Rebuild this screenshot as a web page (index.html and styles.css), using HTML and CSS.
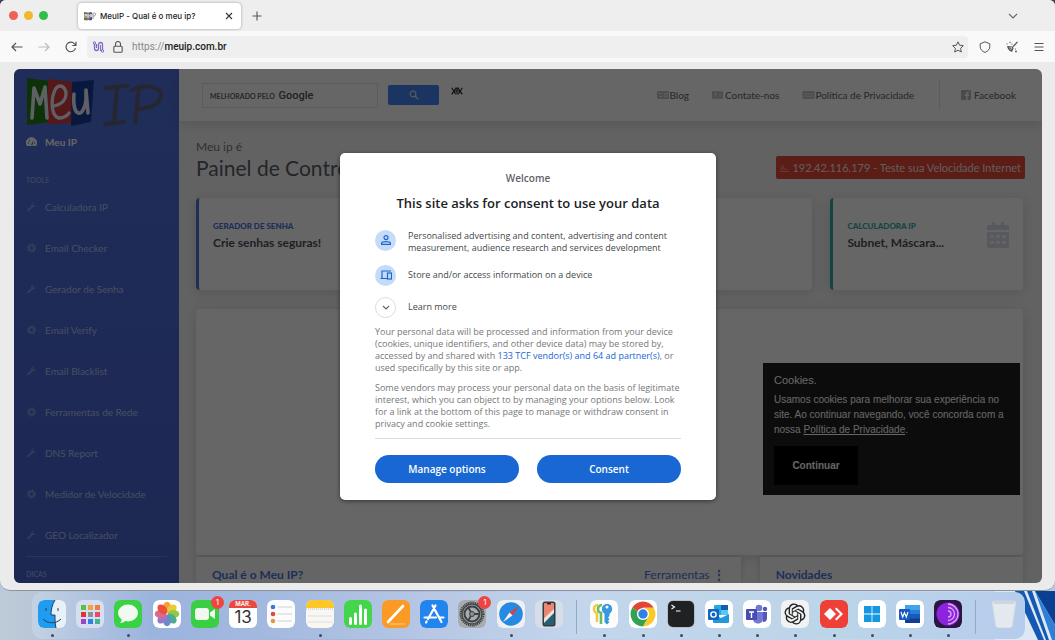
FILE: index.html
```html
<!DOCTYPE html>
<html lang="pt-BR">
<head>
<meta charset="utf-8">
<title>MeuIP - Qual é o meu ip?</title>
<link rel="stylesheet" href="styles.css">
</head>
<body>
<svg class="defs" aria-hidden="true">
  <symbol id="wrench" viewBox="0 0 16 16"><path fill="currentColor" d="M15 4.2a4 4 0 0 1-5.3 4L4 14.4A1.7 1.7 0 0 1 1.500 12L7.700 6.200A4 4 0 0 1 11.800 1L10 3.200l.4 2.300 2.300.4z"/></symbol>
  <symbol id="cog" viewBox="0 0 16 16"><circle cx="8" cy="8" r="4.200" fill="none" stroke="currentColor" stroke-width="3"/><circle cx="8" cy="8" r="6.500" fill="none" stroke="currentColor" stroke-width="2" stroke-dasharray="2.600 2.500"/></symbol>
</svg>

<div class="window">
  <div class="tabbar">
    <div class="lights"><span class="light red"></span><span class="light yellow"></span><span class="light green"></span></div>
    <div class="tab">
      <svg width="12" height="10" viewBox="0 0 24 20"><path fill="#58794f" d="M0 2l7 1v16l-7-1z"/><path fill="#b06a66" d="M6 3h6v15H6z"/><path fill="#3f4e86" d="M11 2l5 1v15l-5 1z"/><path fill="none" stroke="#eee" stroke-width="1.500" d="M2 14V6l2 4 2-4v8M8 10h3c0-4-3-4-3 0 0 4 3 3 3 3M13 6v6h2V6"/><path fill="none" stroke="#938890" stroke-width="2" d="M18 4v12M19 4c6-1 6 6 0 6"/></svg>
      <span class="tab-title">MeuIP - Qual é o meu ip?</span>
      <button class="plain" aria-label="Close tab"><svg width="8" height="8" viewBox="0 0 8 8"><path d="M1 1l6 6M7 1L1 7" stroke="#333" stroke-width="1.100"/></svg></button>
    </div>
    <button class="plain" aria-label="New tab"><svg width="10" height="10" viewBox="0 0 10 10"><path d="M5 .5v9M.5 5h9" stroke="#555" stroke-width="1.100"/></svg></button>
    <button class="plain tabs-menu" aria-label="List tabs"><svg width="10" height="6" viewBox="0 0 10 6"><path d="M1 1l4 4 4-4" fill="none" stroke="#666" stroke-width="1.100"/></svg></button>
  </div>
  <div class="toolbar">
    <button class="plain tool" aria-label="Back"><svg width="12" height="10" viewBox="0 0 12 10"><path d="M11.500 5H1M5 1L1 5l4 4" fill="none" stroke="#555" stroke-width="1.200"/></svg></button>
    <button class="plain tool" aria-label="Forward"><svg width="12" height="10" viewBox="0 0 12 10"><path d="M.5 5H11M7 1l4 4-4 4" fill="none" stroke="#bbb" stroke-width="1.200"/></svg></button>
    <button class="plain tool" aria-label="Reload"><svg width="12" height="12" viewBox="0 0 12 12"><path d="M10.500 7.200A4.800 4.800 0 1 1 9.500 2.800L11 4.300M11 .8v3.700H7.300" fill="none" stroke="#555" stroke-width="1.200"/></svg></button>
    <div class="urlbar">
      <svg width="12" height="12" viewBox="0 0 12 12"><path d="M2.500 3v4.500a2 2 0 0 0 4 0V3.500a2 2 0 0 1 4 0V9M4.500 3v4" fill="none" stroke="#8067c8" stroke-width="1.300"/><circle cx="2.500" cy="2" r="1.200" fill="none" stroke="#8067c8"/><circle cx="10.500" cy="10" r="1.200" fill="none" stroke="#8067c8"/><path d="M8.500 4v6" stroke="#8067c8"/></svg>
      <svg width="10" height="12" viewBox="0 0 10 12"><rect x=".8" y="5.200" width="8.400" height="6" rx="1" fill="none" stroke="#555" stroke-width="1.100"/><path d="M2.500 5V3a2.500 2.500 0 0 1 5 0v2" fill="none" stroke="#555" stroke-width="1.100"/></svg>
      <span class="url"><span class="scheme">https://</span>meuip.com.br</span>
      <button class="plain star" aria-label="Bookmark"><svg width="12" height="12" viewBox="0 0 12 12"><path d="M6 .8l1.600 3.400 3.700.5-2.700 2.600.7 3.700L6 9.200 2.700 11l.7-3.700L.7 4.700l3.700-.5z" fill="none" stroke="#555"/></svg></button>
    </div>
    <button class="plain tool" aria-label="Security level"><svg width="12" height="12" viewBox="0 0 12 12"><path d="M6 .8l4.800 2v3c0 2.500-2 4.600-4.800 5.600C3.200 10.400 1.200 8.300 1.200 5.800v-3z" fill="none" stroke="#555"/></svg></button>
    <button class="plain tool" aria-label="New identity"><svg width="12" height="12" viewBox="0 0 12 12"><path d="M11.500.8L7.200 5.500" stroke="#555" stroke-width="1.200"/><path d="M1 5l6 .5.5 2L6 11C3 10 1.500 8 1 5z" fill="#555"/><path d="M3 7l3-.5M4.500 9L6 7" stroke="#eee" stroke-width=".7"/><g fill="#555"><circle cx="4" cy="1.500" r=".7"/><circle cx="1" cy="3" r=".6"/><circle cx="6" cy="3" r=".6"/><circle cx="10" cy="10.500" r=".9"/><circle cx="9.500" cy="8" r=".6"/></g></svg></button>
    <button class="plain tool" aria-label="Menu"><svg width="10" height="10" viewBox="0 0 10 10"><path d="M.5 1.500h9M.5 5h9M.5 8.500h9" stroke="#555"/></svg></button>
  </div>

  <div class="viewport">
    <div class="page">
      <aside class="sidebar">
        <svg class="logo" width="140" height="54" viewBox="0 0 140 54" role="img" aria-label="Meu IP">
          <path fill="#217d14" d="M1 3l22 3v41L1 50z"/><path fill="#d43a3a" d="M22 4l24 3v41l-24 1z"/><path fill="#143d9c" d="M46 7l22-2-3 42-20 4z"/>
          <g fill="none" stroke-linecap="round" stroke-linejoin="round" stroke="#eef"><path stroke-width="3.600" d="M6 43L8 13l6 16 5-17 2 31"/><path stroke-width="3.300" d="M28 31c17-4 13-20 6-20-9 0-12 32 0 32 4 0 8-3 9-5"/><path stroke-width="3.600" d="M48 19c-2 25 10 24 12 6V15l2 23"/></g>
          <path fill="none" stroke="#606078" stroke-width="4" stroke-linecap="round" stroke-linejoin="round" d="M79 13l22-2M91 13l-3 34M79 49l19-2M113 13c-2 14-3 24-4 35M106 15c14-7 32-3 29 7-3 9-15 12-25 12"/>
        </svg>
        <a class="side-link current" href="#"><svg width="11" height="10" viewBox="0 0 22 20"><path fill="currentColor" d="M2 18a11 11 0 1 1 18 0z"/><g fill="#5072dc"><circle cx="5" cy="12" r="1.500"/><circle cx="7" cy="7" r="1.500"/><circle cx="17" cy="12" r="1.500"/><path d="M10 16l5-10-2 11z"/></g></svg>Meu IP</a>
        <h2 class="side-heading">TOOLS</h2>
        <nav class="side-nav">
          <a class="side-link" href="#"><svg width="11" height="10"><use href="#wrench"/></svg>Calculadora IP</a>
          <a class="side-link" href="#"><svg width="11" height="10"><use href="#cog"/></svg>Email Checker</a>
          <a class="side-link" href="#"><svg width="11" height="10"><use href="#wrench"/></svg>Gerador de Senha</a>
          <a class="side-link" href="#"><svg width="11" height="10"><use href="#cog"/></svg>Email Verify</a>
          <a class="side-link" href="#"><svg width="11" height="10"><use href="#wrench"/></svg>Email Blacklist</a>
          <a class="side-link" href="#"><svg width="11" height="10"><use href="#cog"/></svg>Ferramentas de Rede</a>
          <a class="side-link" href="#"><svg width="11" height="10"><use href="#wrench"/></svg>DNS Report</a>
          <a class="side-link" href="#"><svg width="11" height="10"><use href="#cog"/></svg>Medidor de Velocidade</a>
          <a class="side-link" href="#"><svg width="11" height="10"><use href="#wrench"/></svg>GEO Localizador</a>
        </nav>
        <h2 class="side-heading last">DICAS</h2>
      </aside>

      <div class="main">
        <header class="topbar">
          <label class="search"><span class="search-brand">MELHORADO PELO <b>Google</b></span><input type="text" aria-label="Pesquisar"></label>
          <button class="search-go" aria-label="Buscar"><svg width="10" height="10" viewBox="0 0 10 10"><circle cx="4" cy="4" r="2.900" fill="none" stroke="#ddd" stroke-width="1.200"/><path d="M6.200 6.200L9.300 9.300" stroke="#ddd" stroke-width="1.500"/></svg></button>
          <button class="plain clear" aria-label="Limpar"><svg width="12" height="8" viewBox="0 0 12 8"><path d="M.7.7l4 6.600M5.300.7l-4.600 6.600M6.700.7l4.600 6.600M11.300.7l-4 6.600M6 .5v7M3 4h6" stroke="#333" stroke-width="1.200"/></svg></button>
          <nav class="topnav">
            <a href="#"><svg width="12" height="8" viewBox="0 0 12 8"><rect width="12" height="8" rx="1" fill="#c4c4c8"/><path d="M2 2.500h3M2 5.500h3M7 2.500h4M7 4h4M7 5.500h4" stroke="#eee" stroke-width=".8"/></svg>Blog</a>
            <a class="spaced" href="#"><svg width="11" height="8" viewBox="0 0 12 8"><rect width="12" height="8" rx="1" fill="#c0c0c8"/><circle cx="4" cy="3" r="1.300" fill="#eee"/><path d="M2 6.500c0-2 4-2 4 0M7.500 3h3M7.500 5h3" stroke="#eee" fill="none" stroke-width=".8"/></svg>Contate-nos</a>
            <a href="#"><svg width="13" height="8" viewBox="0 0 12 8"><rect width="12" height="8" rx="1" fill="#c4c4c8"/><path d="M1.500 2.500h9M1.500 4h9M1.500 5.500h9" stroke="#eee" stroke-width=".6"/></svg>Política de Privacidade</a>
            <a class="spaced facebook" href="#"><svg width="10" height="10" viewBox="0 0 10 10"><rect width="10" height="10" rx="1" fill="#b8bac4"/><path d="M6.500 10V6h1.700l.2-1.500H6.500c0-1.500 0-2 1.700-1.800V1.500C5.500 1 5 2.500 5 4.500H3.700V6H5v4z" fill="#fff"/></svg>Facebook</a>
          </nav>
        </header>

        <div class="content">
          <div class="heading">
            <div><p class="kicker">Meu ip é</p><h1>Painel de Controle</h1></div>
            <a class="speed" href="#"><svg width="9" height="8" viewBox="0 0 9 8"><path d="M0 7.500h9M1 6V3M3 6V1M5 6V4M7 6V5" stroke="#f19a8e" stroke-width="1.100"/></svg>192.42.116.179 - Teste sua Velocidade Internet</a>
          </div>
          <div class="cards">
            <section class="card blue"><div><h3>GERADOR DE SENHA</h3><p>Crie senhas seguras!</p></div></section>
            <section class="card teal"><div><h3>CALCULADORA IP</h3><p>Subnet, Máscara...</p></div><svg width="22" height="26" viewBox="0 0 22 26"><path fill="#dddfeb" d="M2 3h3V0h3v3h6V0h3v3h3q2 0 2 2v3H0V5q0-2 2-2zM0 10h22v14q0 2-2 2H2q-2 0-2-2z"/><path fill="#f8f8fa" d="M3 13h4v3H3zM9 13h4v3H9zM15 13h4v3h-4zM3 19h4v3H3zM9 19h4v3H9zM15 19h4v3h-4z"/></svg></section>
          </div>
          <section class="board"></section>
          <div class="panels">
            <section class="panel"><h2>Qual é o Meu IP?</h2><a href="#">Ferramentas <span aria-hidden="true" class="dots">⋮</span></a></section>
            <section class="panel"><h2>Novidades</h2></section>
          </div>
        </div>
      </div>

      <section class="cookies">
        <h2>Cookies.</h2>
        <p>Usamos cookies para melhorar sua experiência no site. Ao continuar navegando, você concorda com a nossa <a href="#">Política de Privacidade</a>.</p>
        <button>Continuar</button>
      </section>

      <div class="overlay">
        <div class="dialog" role="dialog" aria-labelledby="consent-title">
          <p class="welcome">Welcome</p>
          <h2 id="consent-title">This site asks for consent to use your data</h2>
          <ul>
            <li class="tall"><span class="disc"><svg width="12" height="12" viewBox="0 0 12 12"><circle cx="6" cy="3.600" r="2" fill="none" stroke="#1967d2" stroke-width="1.200"/><path d="M1.600 10.400V9.200C2 7.200 10 7.200 10.400 9.200v1.200z" fill="none" stroke="#1967d2" stroke-width="1.200"/></svg></span><span>Personalised advertising and content, advertising and content measurement, audience research and services development</span></li>
            <li><span class="disc"><svg width="12" height="12" viewBox="0 0 12 12"><path d="M11 2H2v7M.5 9.500H7" fill="none" stroke="#1967d2" stroke-width="1.200"/><rect x="7.500" y="4" width="4" height="6" fill="none" stroke="#1967d2" stroke-width="1.200"/></svg></span><span>Store and/or access information on a device</span></li>
            <li><button class="disc open" aria-label="Learn more"><svg width="8" height="5" viewBox="0 0 8 5"><path d="M1 1l3 3 3-3" fill="none" stroke="#5f6368" stroke-width="1.100"/></svg></button><span>Learn more</span></li>
          </ul>
          <p class="legal">Your personal data will be processed and information from your device (cookies, unique identifiers, and other device data) may be stored by, accessed by and shared with <a href="#">133 TCF vendor(s) and 64 ad partner(s)</a>, or used specifically by this site or app.</p>
          <p class="legal">Some vendors may process your personal data on the basis of legitimate interest, which you can object to by managing your options below. Look for a link at the bottom of this page to manage or withdraw consent in privacy and cookie settings.</p>
          <div class="actions"><button>Manage options</button><button>Consent</button></div>
        </div>
      </div>
    </div>
  </div>
</div>

<footer class="desktop">
  <svg class="streaks" width="60" height="49" viewBox="0 0 60 49" aria-hidden="true"><path fill="#dce8f4" d="M0 0h60v49H0z"/><path fill="#1458b4" d="M20 0h9l20 49h-6zM32 0h5l17 49h-3z"/><path fill="#0b3f94" d="M40 0h20v34z"/><path fill="#2f7fd8" d="M40 0l20 34v15h-3z"/></svg>
  <div class="dock">
    <div class="app on"><svg viewBox="0 0 28 28"><rect width="28" height="28" rx="6" fill="#e9f1f8"/><path d="M6 0h11c-3 5-4 10-4 15h4c0 5 0 9 1 13H6q-6 0-6-6V6q0-6 6-6z" fill="#209bf2"/><path d="M8 8v3M20 8v3M5 19c5 5 13 5 18 0M17 0c-3 5-4 10-4 15h4c0 5 0 9 1 13" fill="none" stroke="#24435e" stroke-width="1"/></svg></div>
    <div class="app"><svg viewBox="0 0 28 28"><rect width="28" height="28" rx="6" fill="#d5dfef"/><path fill="#58c247" d="M5 5h5v5H5z"/><path fill="#f3a33b" d="M12 5h5v5h-5z"/><path fill="#ef7f37" d="M19 5h5v5h-5z"/><path fill="#d9353a" d="M5 12h5v5H5z"/><path fill="#8e9298" d="M12 12h5v5h-5z"/><path fill="#e8486c" d="M19 12h5v5h-5z"/><path fill="#9c46c4" d="M5 19h5v5H5z"/><path fill="#2f82e5" d="M12 19h5v5h-5z"/><path fill="#44b38f" d="M19 19h5v5h-5z"/></svg></div>
    <div class="app on"><svg viewBox="0 0 28 28"><rect width="28" height="28" rx="6" fill="#38d244"/><ellipse cx="14" cy="13" rx="10" ry="8.500" fill="#f1faf0"/><path d="M8 18q0 3-2 5 4 0 6-3z" fill="#f1faf0"/></svg></div>
    <div class="app"><svg viewBox="0 0 28 28"><rect width="28" height="28" rx="6" fill="#fff"/><g opacity=".95"><ellipse cx="14" cy="7.500" rx="4" ry="5.800" fill="#f59a22"/><ellipse cx="14" cy="7.500" rx="4" ry="5.800" fill="#e9c92c" transform="rotate(45 14 14)"/><ellipse cx="14" cy="7.500" rx="4" ry="5.800" fill="#8dc63f" transform="rotate(90 14 14)"/><ellipse cx="14" cy="7.500" rx="4" ry="5.800" fill="#45a78a" transform="rotate(135 14 14)"/><ellipse cx="14" cy="7.500" rx="4" ry="5.800" fill="#5d87cc" transform="rotate(180 14 14)"/><ellipse cx="14" cy="7.500" rx="4" ry="5.800" fill="#9b6dbd" transform="rotate(225 14 14)"/><ellipse cx="14" cy="7.500" rx="4" ry="5.800" fill="#d7618c" transform="rotate(270 14 14)"/><ellipse cx="14" cy="7.500" rx="4" ry="5.800" fill="#ef4535" transform="rotate(315 14 14)"/></g></svg></div>
    <div class="app"><svg viewBox="0 0 28 28"><rect width="28" height="28" rx="6" fill="#38cf43"/><rect x="4" y="8" width="14" height="12" rx="3" fill="#f0f8ef"/><path d="M19 12.500l5-3.500v10l-5-3.500z" fill="#f0f8ef"/></svg><span class="badge">1</span></div>
    <div class="app"><div class="calendar"><span class="month">MAR.</span><span class="day">13</span></div></div>
    <div class="app"><svg viewBox="0 0 28 28"><rect width="28" height="28" rx="6" fill="#fcfcfc"/><circle cx="6" cy="7" r="2.300" fill="#3779d4"/><circle cx="6" cy="14" r="2.300" fill="#dd4a45"/><circle cx="6" cy="21" r="2.300" fill="#e8954a"/><path d="M10.500 7H25M10.500 14H25M10.500 21H25" stroke="#c6c6c6" stroke-width=".8"/></svg></div>
    <div class="app on"><svg viewBox="0 0 28 28"><rect width="28" height="28" rx="6" fill="#f8f7f3"/><path d="M0 8V6q0-6 6-6h16q6 0 6 6v2z" fill="#fbc827"/><path d="M0 9h28" stroke="#bbb" stroke-dasharray="1 1"/><path d="M2 16h24M2 22h24" stroke="#ddd"/></svg></div>
    <div class="app"><svg viewBox="0 0 28 28"><rect width="28" height="28" rx="6" fill="#43d64b"/><path d="M6.500 23.500v-5M11.500 23.500V14M16.500 23.500V6M21.500 23.500V10" stroke="#fff" stroke-width="3" stroke-linecap="round"/></svg></div>
    <div class="app"><svg viewBox="0 0 28 28"><rect width="28" height="28" rx="6" fill="#fb9a25"/><path d="M6 22L21 6" stroke="#fff" stroke-width="2.600" stroke-linecap="round"/><path d="M8 24h15" stroke="#fbd09a"/></svg></div>
    <div class="app"><svg viewBox="0 0 28 28"><rect width="28" height="28" rx="6" fill="#2285ee"/><path d="M15.500 5.500L8 19M6.500 21.500l-.5 1M12.500 5.500L21.500 22M4.500 17.500H16M20 17.500h3.500" stroke="#fff" stroke-width="2.200" stroke-linecap="round"/></svg></div>
    <div class="app"><svg viewBox="0 0 28 28"><rect width="28" height="28" rx="6" fill="#a9acae"/><circle cx="14" cy="14" r="11.500" fill="none" stroke="#3d4144" stroke-width="2" stroke-dasharray="1.200 .7"/><circle cx="14" cy="14" r="10" fill="none" stroke="#44484b" stroke-width="1.500"/><circle cx="14" cy="14" r="7.500" fill="none" stroke="#3d4144" stroke-width="2"/><path d="M14 14h8M14 14L10 7M14 14l-4 7" stroke="#3d4144" stroke-width="1.800"/><circle cx="14" cy="14" r="2.500" fill="#8b8e90" stroke="#3d4144"/></svg><span class="badge">1</span></div>
    <div class="app on"><svg viewBox="0 0 28 28"><rect width="28" height="28" rx="6" fill="#eef0f2"/><circle cx="14" cy="14" r="11.800" fill="#258ae4"/><path d="M22 6l-6.500 9.500-3-3z" fill="#e33d3b"/><path d="M6 22l6.500-9.500 3 3z" fill="#f4f4f4"/></svg></div>
    <div class="app"><svg viewBox="0 0 28 28"><rect width="28" height="28" rx="6" fill="#d7dee7"/><rect x="7.500" y="1.500" width="13" height="25" rx="2.500" fill="#333c45"/><path d="M9 4q0-1 1-1h8q1 0 1 1v7L9 18z" fill="#eb8672"/><path d="M19 11v13q0 1-1 1h-8q-1 0-1-1v-6z" fill="#255f72"/><path d="M9 18l10-9v4L9 23z" fill="#f0e1db"/><rect x="12" y="3" width="4" height="1.500" rx=".7" fill="#222"/></svg></div>
    <span class="sep"></span>
    <div class="app on"><svg viewBox="0 0 28 28"><rect width="28" height="28" rx="6" fill="#fdfdfd"/><g fill="none" stroke-width="2.600"><path stroke="#f4c642" d="M8 13a4 4 0 0 1 0-8M7 12v10"/><path stroke="#68bd64" d="M12 13a4 4 0 0 1 0-8M11 12v12"/></g><circle cx="17" cy="9" r="5.200" fill="#3a99dc"/><path d="M14.500 13h5v3l-1.500 1.500 1.500 1.500-1.500 2 1.500 1-2.500 2.500-2.500-2.500z" fill="#3a99dc"/><circle cx="17" cy="7" r="1.500" fill="#fff"/></svg></div>
    <div class="app on"><svg viewBox="0 0 28 28"><rect width="28" height="28" rx="6" fill="#fff"/><path d="M14 14L3.200 7.750A12.500 12.500 0 0 1 24.800 7.750H14z" fill="#e24435"/><path d="M14 14L3.200 7.750A12.500 12.500 0 0 0 14 26.500l5.400-9.400z" fill="#31a350"/><path d="M14 7.750h10.800A12.500 12.500 0 0 1 14 26.500l5.400-9.400z" fill="#fbc926"/><circle cx="14" cy="14" r="6.100" fill="#fff"/><circle cx="14" cy="14" r="4.700" fill="#347fe5"/></svg></div>
    <div class="app on"><svg viewBox="0 0 28 28"><rect width="28" height="28" rx="6" fill="#b7bcc1"/><rect x="1" y="1" width="26" height="26" rx="5" fill="#202123"/><path d="M4.500 5l3 2-3 2M9 11h4.500" fill="none" stroke="#fff" stroke-width="1.100"/></svg></div>
    <div class="app on"><svg viewBox="0 0 28 28"><rect width="28" height="28" rx="6" fill="#fff"/><rect x="9" y="5" width="14" height="10" rx="1" fill="#28a8ea"/><path d="M16 5h7v5h-7z" fill="#145db1"/><path d="M16 10h7v5h-7z" fill="#55c9f4"/><path d="M8 14l8 4 8-4v8q0 1-1 1H9q-1 0-1-1z" fill="#2398da"/><rect x="3" y="9" width="11" height="11" rx="1" fill="#1267bd"/><circle cx="8.500" cy="14.500" r="2.600" fill="none" stroke="#fff" stroke-width="1.400"/></svg></div>
    <div class="app on"><svg viewBox="0 0 28 28"><rect width="28" height="28" rx="6" fill="#fff"/><circle cx="16" cy="8" r="3.300" fill="#7078d1"/><circle cx="22" cy="9" r="2.200" fill="#5059b9"/><path d="M19 12h5v6q0 4-4 4z" fill="#5059b9"/><path d="M10 12h10v7c0 6-10 6-10 0z" fill="#7078d1"/><rect x="3" y="9" width="11" height="11" rx="1" fill="#484eb1"/><path d="M6 12h5M8.500 12v6" stroke="#fff" stroke-width="1.400"/></svg></div>
    <div class="app on"><svg viewBox="0 0 28 28"><rect width="28" height="28" rx="6" fill="#f0f2f3"/><path transform="translate(3.500 3.500) scale(.875)" fill="#222" d="M22.2819 9.8211a5.9847 5.9847 0 0 0-.5157-4.9108 6.0462 6.0462 0 0 0-6.5098-2.9A6.0651 6.0651 0 0 0 4.9807 4.1818a5.9847 5.9847 0 0 0-3.9977 2.9 6.0462 6.0462 0 0 0 .7427 7.0966 5.98 5.98 0 0 0 .511 4.9107 6.051 6.051 0 0 0 6.5146 2.9001A5.9847 5.9847 0 0 0 13.2599 24a6.0557 6.0557 0 0 0 5.7718-4.2058 5.9894 5.9894 0 0 0 3.9977-2.9001 6.0557 6.0557 0 0 0-.7475-7.0729zm-9.022 12.6081a4.4755 4.4755 0 0 1-2.8764-1.0408l.1419-.0804 4.7783-2.7582a.7948.7948 0 0 0 .3927-.6813v-6.7369l2.02 1.1686a.071.071 0 0 1 .038.052v5.5826a4.504 4.504 0 0 1-4.4945 4.4944zm-9.6607-4.1254a4.4708 4.4708 0 0 1-.5346-3.0137l.142.0852 4.783 2.7582a.7712.7712 0 0 0 .7806 0l5.8428-3.3685v2.3324a.0804.0804 0 0 1-.0332.0615L9.74 19.9502a4.4992 4.4992 0 0 1-6.1408-1.6464zM2.3408 7.8956a4.485 4.485 0 0 1 2.3655-1.9728V11.6a.7664.7664 0 0 0 .3879.6765l5.8144 3.3543-2.0201 1.1685a.0757.0757 0 0 1-.071 0l-4.8303-2.7865A4.504 4.504 0 0 1 2.3408 7.872zm16.5963 3.8558L13.1038 8.364 15.1192 7.2a.0757.0757 0 0 1 .071 0l4.8303 2.7913a4.4944 4.4944 0 0 1-.6765 8.1042v-5.6772a.79.79 0 0 0-.407-.667zm2.0107-3.0231l-.142-.0852-4.7735-2.7818a.7759.7759 0 0 0-.7854 0L9.409 9.2297V6.8974a.0662.0662 0 0 1 .0284-.0615l4.8303-2.7866a4.4992 4.4992 0 0 1 6.6802 4.66zM8.3065 12.863l-2.02-1.1638a.0804.0804 0 0 1-.038-.0567V6.0742a4.4992 4.4992 0 0 1 7.3757-3.4537l-.142.0805L8.704 5.459a.7948.7948 0 0 0-.3927.6813zm1.0976-2.3654l2.602-1.4998 2.6069 1.4998v2.9994l-2.5974 1.4997-2.6067-1.4997Z"/></svg></div>
    <div class="app on"><svg viewBox="0 0 28 28"><rect width="28" height="28" rx="6" fill="#ee4037"/><path d="M4 14l6-6 6 6-6 6z" fill="#fff"/><path d="M15 9l1.500-1.500L23 14l-6.500 6.500L15 19l5-5z" fill="#fff"/></svg></div>
    <div class="app on"><svg viewBox="0 0 28 28"><rect width="28" height="28" rx="6" fill="#fff"/><path d="M6 6h7.600v7.600H6zM14.400 6H22v7.600h-7.600zM6 14.400h7.600V22H6zM14.400 14.400H22V22h-7.600z" fill="#1598df"/></svg></div>
    <div class="app on"><svg viewBox="0 0 28 28"><rect width="28" height="28" rx="6" fill="#fff"/><rect x="9" y="5" width="15" height="18" rx="1" fill="#185abd"/><path d="M9 5h15v5H9z" fill="#41a5ee"/><path d="M9 10h15v4H9z" fill="#2b7cd3"/><path d="M9 18.500h15V22q0 1-1 1H10q-1 0-1-1z" fill="#103f91"/><rect x="3" y="9" width="11" height="11" rx="1" fill="#185abd"/><path d="M5 12l1.700 5L8.500 12.500l1.800 4.500L12 12" fill="none" stroke="#fff" stroke-width="1.200"/></svg></div>
    <div class="app on"><svg viewBox="0 0 28 28"><rect width="28" height="28" rx="6" fill="#2c1543"/><circle cx="14" cy="14" r="11.500" fill="#8b24dc"/><g fill="none" stroke="#dca7f8" stroke-width="1.300"><path d="M14 4a10 10 0 0 1 0 20M14 7.500a6.500 6.500 0 0 1 0 13M14 11a3 3 0 0 1 0 6"/></g></svg></div>
    <span class="sep"></span>
    <div class="app"><svg viewBox="0 0 28 28"><path d="M2 1h24l-3.500 24q-.5 3-3 3h-11q-2.500 0-3-3z" fill="#e4e9ef" stroke="#d2d9e2"/><path d="M3 1h22l-1 3H4z" fill="#cfd5dd"/></svg></div>
  </div>
</footer>
</body>
</html>
```
FILE: styles.css
```css
* { box-sizing: border-box; }
html, body { height: 100%; }
body {
  margin: 0;
  display: flex;
  flex-direction: column;
  min-height: 640px;
  background: linear-gradient(#4b3b5e, #a9bcd6 40%, #b9cbe4);
  font-family: "Open Sans", sans-serif;
}
h1, h2, h3, p, ul { margin: 0; padding: 0; font-weight: 400; }
a { color: inherit; text-decoration: none; }
svg { display: block; flex: none; }
button { font: inherit; border: 0; cursor: pointer; }
.defs { position: absolute; width: 0; height: 0; }
.plain { display: flex; align-items: center; justify-content: center; padding: 0; background: none; }

.window {
  flex: 1;
  min-height: 0;
  display: flex;
  flex-direction: column;
  border-radius: 6px 6px 10px 10px;
  background: #ebebeb;
  border-bottom: 1px solid #8c939c;
  overflow: hidden;
}
.tabbar { height: 31px; display: flex; align-items: center; gap: 11px; padding: 0 37px 0 9px; background: #eee; }
.lights { display: flex; gap: 6px; width: 58px; }
.light { width: 9px; height: 9px; border-radius: 50%; }
.red { background: #f0615a; }
.yellow { background: #f3b62f; }
.green { background: #2fbf4b; }
.tab {
  width: 163px;
  height: 26px;
  display: flex;
  align-items: center;
  gap: 4px;
  padding: 0 8px 0 6px;
  border-radius: 4px;
  background: #fff;
  box-shadow: 0 0 3px rgba(0, 0, 0, .35);
}
.tab-title { flex: 1; font: 500 8px Inter, sans-serif; color: #222; }
.tabs-menu { margin-left: auto; }
.toolbar { height: 31px; display: flex; align-items: center; gap: 14px; padding: 0 10px; background: #f9f9f9; }
.tool { width: 13px; height: 20px; }
.urlbar { flex: 1; height: 22px; display: flex; align-items: center; gap: 9px; margin: 0 -4px; padding: 0 4px 0 5px; border-radius: 4px; background: #efefef; }
.url { flex: 1; font: 500 10px Roboto, sans-serif; color: #222; }
.scheme { color: #888; font-weight: 400; }

.viewport { flex: 1; min-height: 0; display: flex; padding: 7px 13px 7px 14px; }
.page {
  position: relative;
  flex: 1;
  display: flex;
  border-radius: 6px;
  overflow: hidden;
  background: #f6f6f7;
  font-family: Lato, sans-serif;
  color: #5a5c69;
}
.sidebar {
  width: 165px;
  flex: none;
  display: flex;
  flex-direction: column;
  padding: 6px 12px 0;
  background: linear-gradient(#5072e0, #4863cd);
  color: #b4c2f2;
}
.side-link { display: flex; align-items: center; gap: 8px; font-size: 10px; line-height: 12px; }
.side-link svg { opacity: .5; }
.current { height: 26px; color: #fff; font-weight: 700; }
.current svg { opacity: 1; }
.side-heading { padding: 19px 0 0; font-size: 7px; line-height: 12px; font-weight: 700; color: #96a9ea; }
.side-nav { flex: 1; display: grid; grid-auto-rows: 1fr; border-bottom: 1px solid #6c86dc; }
.side-heading.last { padding: 11px 0 3px; }

.main { flex: 1; min-width: 0; display: flex; flex-direction: column; }
.topbar { height: 52px; display: flex; align-items: center; padding: 0 26px 0 23px; background: #fff; box-shadow: 0 2px 14px rgba(58, 59, 69, .2); }
.search { width: 176px; height: 25px; display: flex; align-items: center; padding: 0 7px; border: 1px solid #e4e4e4; }
.search-brand { flex: none; font: 700 7px Lato, sans-serif; color: #666; }
.search-brand b { margin-left: 2px; font: 500 11px Roboto, sans-serif; color: #555; }
.search input { flex: 1; min-width: 0; border: 0; outline: 0; background: none; }
.search-go { width: 51px; height: 20px; margin: 0 12px 0 10px; padding: 0; display: flex; align-items: center; justify-content: center; border-radius: 2px; background: #4285f4; }
.clear { align-self: flex-start; margin-top: 18px; }
.topnav { flex: 1; display: flex; align-items: center; justify-content: flex-end; gap: 23px; font-size: 10px; color: #60626f; }
.topnav a { display: flex; align-items: center; white-space: nowrap; }
.spaced { gap: 2px; }
.topnav .facebook { height: 30px; gap: 3px; margin-left: 2px; padding-left: 21px; border-left: 1px solid #e3e6f0; }

.content { flex: 1; display: flex; flex-direction: column; padding: 18px 19px 0 17px; }
.heading { display: flex; justify-content: space-between; align-items: center; margin: 0 -2px 17px 0; }
.kicker { font-size: 12px; line-height: 16px; color: #75777f; }
h1 { font-size: 21px; line-height: 26px; }
.speed { display: flex; align-items: center; gap: 3px; height: 23px; margin-top: 17px; align-self: flex-start; padding: 0 4px; border-radius: 2px; background: #e74a3b; color: #f6e4e2; font-size: 11px; }
.cards { display: grid; grid-template-columns: 3.2fr 1fr; gap: 18px; margin-bottom: 19px; }
.card { height: 92px; display: flex; justify-content: space-between; padding: 21px 14px; border-left: 3px solid; border-radius: 4px; background: #fff; box-shadow: 0 2px 14px rgba(58, 59, 69, .18); }
.card h3 { font-size: 8px; line-height: 14px; font-weight: 900; }
.card p { font-size: 12px; line-height: 20px; font-weight: 700; color: #4e5058; }
.card svg { margin-top: 3px; }
.blue { border-color: #4e73df; }
.blue h3 { color: #4e73df; }
.teal { border-color: #36a9a8; }
.teal h3 { color: #36a9a8; }
.board { flex: 1; border-radius: 4px; background: #fff; box-shadow: 0 2px 14px rgba(58, 59, 69, .18); }
.panels { display: grid; grid-template-columns: 546fr 264fr; gap: 19px; margin-top: 2px; }
.panel { height: 26px; display: flex; justify-content: space-between; align-items: center; padding: 10px 16px 0; background: #fcfcfd; box-shadow: 0 0 6px rgba(58, 59, 69, .2); color: #4e73df; font-size: 12px; line-height: 16px; }
.panel h2 { font-size: 12px; font-weight: 700; }
.dots { font-weight: 900; }

.cookies { position: absolute; right: 22px; bottom: 88px; width: 257px; padding: 10px 11px; background: #202020; color: #fff; font-family: "Liberation Sans", sans-serif; }
.cookies h2 { font-size: 11px; line-height: 14px; }
.cookies p { margin: 5px 0 9px; font-size: 10px; line-height: 15px; }
.cookies a { text-decoration: underline; }
.cookies button { width: 84px; height: 39px; background: #000; color: #fff; font-size: 10px; font-weight: 700; }

.overlay { position: absolute; inset: 0; display: flex; align-items: center; justify-content: center; background: rgba(0, 0, 0, .6); }
.dialog { width: 376px; padding: 18px 35px 17px; border-radius: 5px; background: #fff; box-shadow: 0 1px 4px rgba(0, 0, 0, .5); font-family: "Open Sans", sans-serif; font-size: 9px; line-height: 12px; color: #5f6368; }
.welcome { text-align: center; font-size: 10px; line-height: 14px; font-weight: 600; }
.dialog h2 { margin: 9px 0 18px; text-align: center; font-size: 13px; line-height: 18px; font-weight: 600; color: #202124; }
.dialog ul { display: grid; gap: 11px; list-style: none; font-weight: 500; color: #444749; }
.dialog li { display: flex; align-items: center; gap: 12px; }
.dialog .tall { align-items: flex-start; }
.disc { flex: none; width: 21px; height: 21px; display: flex; align-items: center; justify-content: center; padding: 0; border-radius: 50%; background: #c6dbf8; }
.open { border: 1px solid #dadce0; background: #fff; }
.legal { margin-top: 8px; color: #757779; }
.legal a { color: #1967d2; font-weight: 500; }
.actions { display: grid; grid-template-columns: 1fr 1fr; gap: 18px; margin-top: 8px; padding-top: 16px; border-top: 1px solid #dadce0; }
.actions button { height: 28px; border-radius: 14px; background: #1967d2; color: #fff; font-size: 10px; font-weight: 600; }

.desktop { position: relative; flex: none; padding: 1px 30px 1px 32px; background: linear-gradient(90deg, #bfcbd8, #9fb6da 15%, #a5b9de 40%, #bdd2ea 50%, #c5daf0); }
.streaks { position: absolute; right: 0; top: 0; }
.dock {
  position: relative;
  height: 47px;
  display: flex;
  align-items: flex-start;
  justify-content: space-between;
  padding: 8px 7px 0 6px;
  border-radius: 10px;
  background: linear-gradient(90deg, #c3d2e2, #9bb4de 12%, #a4badf 25%, #b7c7e4 40%, #c3d6ec 55%, #bdd5e8 80%, #b5cdec);
}
.app { position: relative; width: 28px; height: 28px; }
.app > svg { width: 28px; height: 28px; border-radius: 6px; }
.on::after { content: ""; position: absolute; left: 13px; top: 34px; width: 3px; height: 3px; border-radius: 50%; background: #3c4a5a; }
.badge { position: absolute; right: -5px; top: -4px; width: 13px; height: 13px; border-radius: 50%; background: #ee4540; color: #fff; font: 8px/13px Inter, sans-serif; text-align: center; }
.calendar { height: 28px; display: flex; flex-direction: column; border-radius: 6px; overflow: hidden; background: #fff; text-align: center; font-family: Inter, sans-serif; }
.month { background: #e9483f; color: #fff; font-size: 6px; line-height: 8px; font-weight: 600; }
.day { color: #333; font-size: 17px; line-height: 19px; }
.sep { width: 1px; height: 34px; margin: 0 3px; background: #98a9bd; }
```
